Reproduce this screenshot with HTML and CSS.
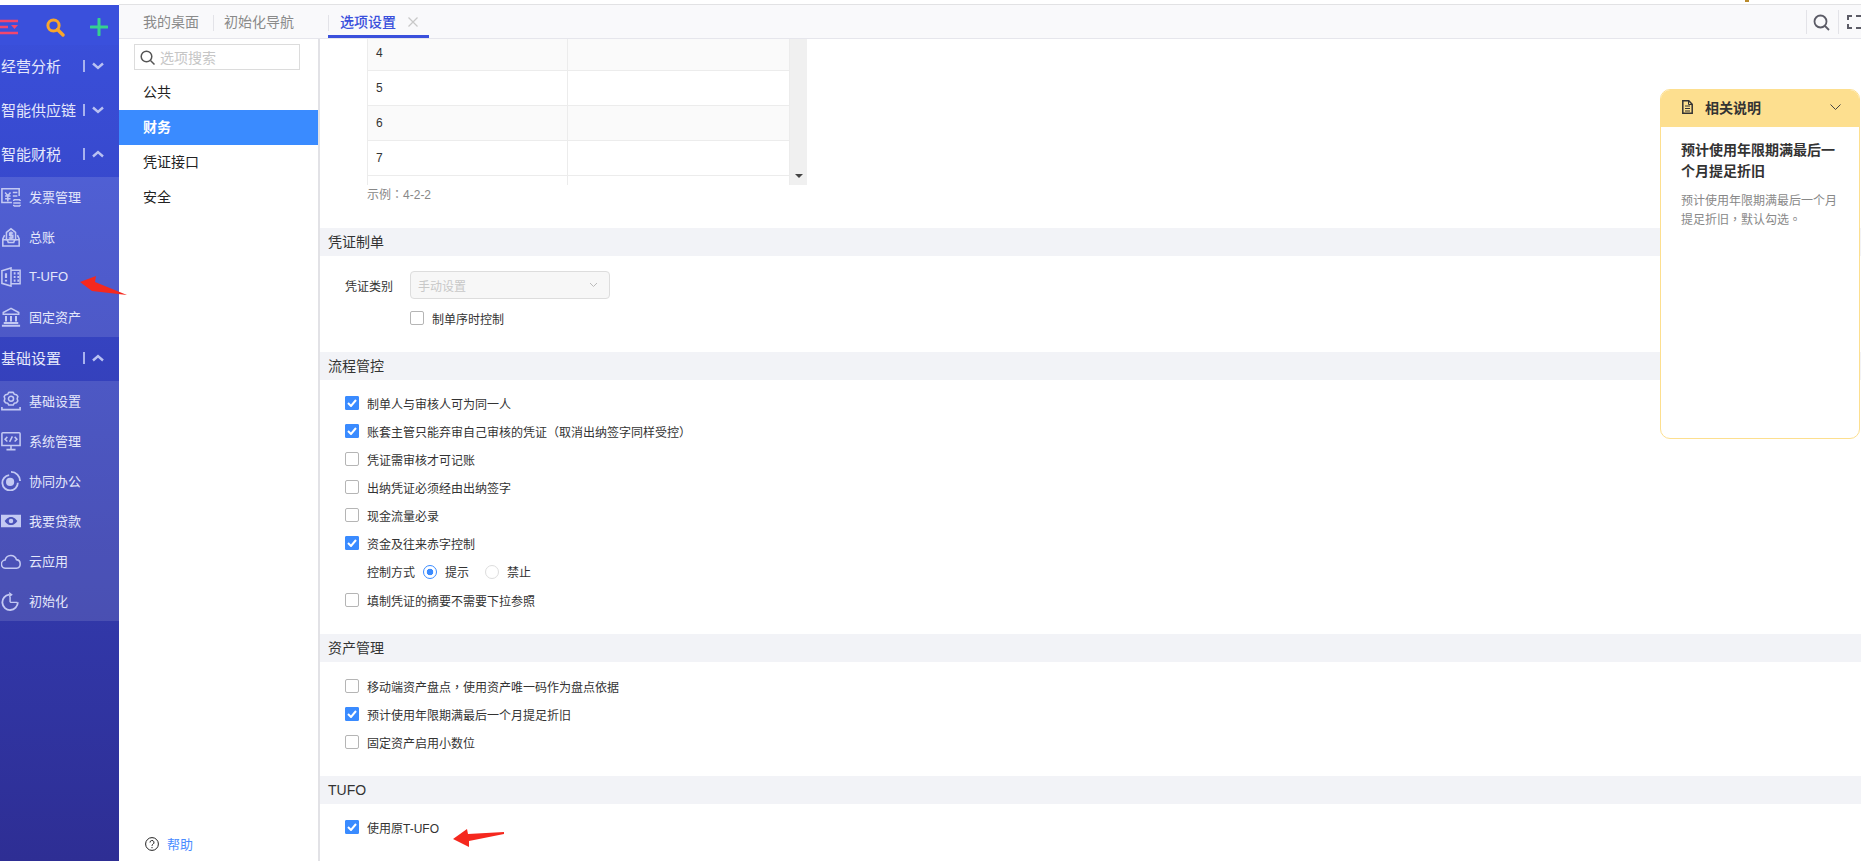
FILE: index.html
```html
<!DOCTYPE html>
<html>
  <head>
    <meta charset="utf-8" />
    <meta name="viewport" content="width=device-width, initial-scale=1" />
    <title>选项设置</title>
    <link rel="stylesheet" href="styles.css">
  </head>
  <body>
    <div class="top-strip"><span class="strip-mark"></span></div>
    <div class="app">
      <!-- blue sidebar -->
      <div class="sidebar">
        <div class="side-top">
          <svg width="20" height="16" viewBox="0 0 20 16"><path d="M0 2h18M0 8h8M0 14h18" stroke="#f2466e" stroke-width="2.4" fill="none"/><path d="M11 6h7l-3.500 4z" fill="#f2466e"/></svg>
          <svg width="19" height="19" viewBox="0 0 19 19"><circle cx="7.500" cy="7.500" r="5.600" stroke="#f9a62b" stroke-width="3" fill="none"/><path d="M11.500 11.500l5.500 5.500" stroke="#f9a62b" stroke-width="3.400" stroke-linecap="round"/></svg>
          <svg width="18" height="18" viewBox="0 0 18 18"><path d="M9 1v16M1 9h16" stroke="#35d18f" stroke-width="3" stroke-linecap="round"/></svg>
        </div>

        <div class="menu-head"><span>经营分析</span><i class="bar"></i><svg class="chev" width="12" height="8" viewBox="0 0 12 8"><path d="M1 1.500l5 4.500 5-4.500" /></svg></div>
        <div class="menu-head"><span>智能供应链</span><i class="bar"></i><svg class="chev" width="12" height="8" viewBox="0 0 12 8"><path d="M1 1.500l5 4.500 5-4.500" /></svg></div>
        <div class="menu-head"><span>智能财税</span><i class="bar"></i><svg class="chev" width="12" height="8" viewBox="0 0 12 8"><path d="M1 6.500l5-4.500 5 4.500" /></svg></div>
        <div class="sub-menu">
          <div class="sub-item">
            <svg class="side-icon" viewBox="0 0 22 22"><path d="M12 17H1V2h19v8"/><path d="M4.500 6L7.500 9.500 10.500 6M4.500 10h6M4.500 13h6M7.500 9.500V16M13 6h5M13 10h5"/><path d="M14 14h7M14 21h7M14 14v1.500M21 14v1.500M14 21v-1.500M21 21v-1.500M13.500 17.500h8"/></svg>
            <span>发票管理</span>
          </div>
          <div class="sub-item">
            <svg class="side-icon" viewBox="0 0 22 22"><path d="M4 9L2 13v8h18v-8l-2-4"/><path d="M2 14h5l1 3h6l1-3h5"/><path d="M6 6l5-4 5 4v8H6z"/><path d="M13.500 6.500h-4v2.700h3.500V12H8.500M11 5v8.500"/></svg>
            <span>总账</span>
          </div>
          <div class="sub-item">
            <svg class="side-icon" viewBox="0 0 22 22"><path d="M1 4l10-3v20L1 18zM11 3.500h10v15H11"/><path d="M5.500 7v5M5.500 14v2M14 7h2M18 7h2M14 11h2M18 11h2M14 15h2M18 15h2" stroke-width="2.400"/></svg>
            <span>T-UFO</span>
          </div>
          <div class="sub-item">
            <svg class="side-icon" viewBox="0 0 22 22"><path d="M11 1.500L2.500 6v2h17V6z"/><path d="M1 20.500h20M3 17.500h16M5.500 10v6M11 10v6M16.500 10v6" stroke-width="2.200"/></svg>
            <span>固定资产</span>
          </div>
        </div>

        <div class="menu-head"><span>基础设置</span><i class="bar"></i><svg class="chev" width="12" height="8" viewBox="0 0 12 8"><path d="M1 6.500l5-4.500 5 4.500" /></svg></div>
        <div class="sub-menu">
          <div class="sub-item">
            <svg class="side-icon" viewBox="0 0 22 22"><path d="M8.500 1.500h5l1 2 2.500.5 1.500 2-.7 2.500.7 2.500-1.500 2-2.500.5-1 2h-5l-1-2-2.500-.5-1.500-2 .7-2.500-.7-2.500 1.500-2 2.500-.5z" stroke-linejoin="round"/><circle cx="11" cy="8.500" r="2.800"/><path d="M1 17.500v3h20v-3" stroke-width="1.800"/></svg>
            <span>基础设置</span>
          </div>
          <div class="sub-item">
            <svg class="side-icon" viewBox="0 0 22 22"><path d="M2 2h18a1 1 0 0 1 1 1v13H1V3a1 1 0 0 1 1-1zM11 16v4M6 20.500h10"/><path d="M7 6.500L4.500 9 7 11.500M15 6.500L17.500 9 15 11.500M12.500 6l-3 6"/></svg>
            <span>系统管理</span>
          </div>
          <div class="sub-item">
            <svg class="side-icon" viewBox="0 0 22 22"><path d="M9 4.500A8.500 8.500 0 1 0 18.500 13" stroke-width="2"/><path d="M11 1a10 10 0 0 1 10 10" stroke-width="2"/><circle cx="10" cy="12" r="4.500" fill="#c3c9f3" stroke="none"/></svg>
            <span>协同办公</span>
          </div>
          <div class="sub-item">
            <svg class="side-icon" viewBox="0 0 22 22"><path fill-rule="evenodd" fill="#c3c9f3" stroke="none" d="M0 4h22v14H0zM11 6.500c-3.500 0-6 3-7 4.500 1 1.500 3.500 4.500 7 4.500s6-3 7-4.500c-1-1.500-3.500-4.500-7-4.500z"/><circle cx="11" cy="11" r="2.500" fill="#c3c9f3" stroke="none"/></svg>
            <span>我要贷款</span>
          </div>
          <div class="sub-item">
            <svg class="side-icon" viewBox="0 0 22 22"><path d="M5.500 19A4.500 4.500 0 0 1 4.500 10 6.500 6.500 0 0 1 17 9.500 4.800 4.800 0 0 1 17 19z" stroke-width="1.700"/></svg>
            <span>云应用</span>
          </div>
          <div class="sub-item">
            <svg class="side-icon" viewBox="0 0 22 22"><path d="M9 4a8.500 8.500 0 1 0 9.500 8.500" stroke-width="2"/><path d="M10 12.500h8M10 6v6.500" stroke-width="1.600"/><path d="M9 1v6l4-3z" fill="#c3c9f3" stroke="none"/></svg>
            <span>初始化</span>
          </div>
        </div>
      </div>

      <!-- option groups -->
      <div class="nav">
        <div class="tab-fill"></div>
        <div class="search-box">
          <svg width="15" height="15" viewBox="0 0 15 15"><circle cx="6.500" cy="6.500" r="5.300" stroke="#555" stroke-width="1.500" fill="none"/><path d="M10.500 10.500l4 4" stroke="#555" stroke-width="1.500"/></svg>
          <span>选项搜索</span>
        </div>
        <div class="nav-item">公共</div>
        <div class="nav-item active">财务</div>
        <div class="nav-item">凭证接口</div>
        <div class="nav-item">安全</div>
        <div class="help">
          <svg width="14" height="14" viewBox="0 0 14 14"><circle cx="7" cy="7" r="6.400" stroke="#222" fill="none"/><path d="M5 5.500a2 2 0 1 1 3 1.700c-.7.400-1 .8-1 1.600M7 10v1.200" stroke="#222" fill="none"/></svg>
          <span>帮助</span>
        </div>
      </div>

      <div class="main">
        <div class="tabs">
          <div class="tab">我的桌面</div>
          <div class="tab">初始化导航</div>
          <div class="tab current">选项设置
            <svg width="10" height="10" viewBox="0 0 10 10"><path d="M.5.500l9 9M9.500.500l-9 9" stroke="#c8c8c8" stroke-width="1.200"/></svg>
          </div>
          <div class="tab-tools">
            <svg width="17" height="17" viewBox="0 0 17 17"><circle cx="7.500" cy="7.500" r="6" stroke="#5b5b66" stroke-width="1.800" fill="none"/><path d="M12 12l4 4" stroke="#5b5b66" stroke-width="1.800"/></svg>
            <i class="tool-sep"></i>
            <svg width="14" height="14" viewBox="0 0 14 14"><path d="M1 5V1h4M9 1h5M1 9v4h4M9 13h5" stroke="#5b5b66" stroke-width="2" fill="none"/></svg>
          </div>
        </div>

        <div class="content">
          <div class="code-table">
            <div class="code-rows">
              <div class="code-row odd"><div>4</div><div></div></div>
              <div class="code-row"><div>5</div><div></div></div>
              <div class="code-row odd"><div>6</div><div></div></div>
              <div class="code-row"><div>7</div><div></div></div>
              <div class="code-row"><div></div><div></div></div>
            </div>
            <div class="code-scroll"><i></i></div>
          </div>
          <div class="sample">示例<span class="mark">：</span>4-2-2</div>

          <div class="section-title first">凭证制单</div>
          <div class="form-line">
            <label>凭证类别</label>
            <div class="select">手动设置
              <svg width="9" height="6" viewBox="0 0 9 6"><path d="M1 1l3.500 3.500L8 1" stroke="#bbb" fill="none"/></svg>
            </div>
          </div>
          <div class="check-row inset"><span class="check"></span>制单序时控制</div>

          <div class="section-title">流程管控</div>
          <div class="group">
            <div class="check-row"><span class="check on"><svg width="10" height="8" viewBox="0 0 10 8"><path d="M1 4l3 3 5-6" /></svg></span>制单人与审核人可为同一人</div>
            <div class="check-row"><span class="check on"><svg width="10" height="8" viewBox="0 0 10 8"><path d="M1 4l3 3 5-6" /></svg></span><span>账套主管只能弃审自己审核的凭证<span class="mark">（</span>取消出纳签字同样受控<span class="mark">）</span></span></div>
            <div class="check-row"><span class="check"></span>凭证需审核才可记账</div>
            <div class="check-row"><span class="check"></span>出纳凭证必须经由出纳签字</div>
            <div class="check-row"><span class="check"></span>现金流量必录</div>
            <div class="check-row"><span class="check on"><svg width="10" height="8" viewBox="0 0 10 8"><path d="M1 4l3 3 5-6" /></svg></span>资金及往来赤字控制</div>
            <div class="radio-row">
              <span>控制方式</span>
              <span class="radio on"></span><span>提示</span>
              <span class="radio second"></span><span>禁止</span>
            </div>
            <div class="check-row"><span class="check"></span>填制凭证的摘要不需要下拉参照</div>
          </div>

          <div class="section-title">资产管理</div>
          <div class="group roomy">
            <div class="check-row"><span class="check"></span><span>移动端资产盘点<span class="mark">，</span>使用资产唯一码作为盘点依据</span></div>
            <div class="check-row"><span class="check on"><svg width="10" height="8" viewBox="0 0 10 8"><path d="M1 4l3 3 5-6" /></svg></span>预计使用年限期满最后一个月提足折旧</div>
            <div class="check-row"><span class="check"></span>固定资产启用小数位</div>
          </div>

          <div class="section-title">TUFO</div>
          <div class="group">
            <div class="check-row"><span class="check on"><svg width="10" height="8" viewBox="0 0 10 8"><path d="M1 4l3 3 5-6" /></svg></span>使用原T-UFO</div>
          </div>

          <div class="note-panel">
            <div class="note-head">
              <svg width="11" height="14" viewBox="0 0 11 14"><path d="M.8.800h6l3.400 3.400v9H.8z" stroke="#333" stroke-width="1.500" fill="none"/><path d="M3 6h5M3 8.500h5M3 11h5M6.500 1v3.500h3.500" stroke="#333" fill="none"/></svg>
              <span>相关说明</span>
              <svg class="note-chev" width="11" height="7" viewBox="0 0 11 7"><path d="M.5.500l5 5 5-5" stroke="#444" fill="none"/></svg>
            </div>
            <div class="note-body">
              <h4>预计使用年限期满最后一个月提足折旧</h4>
              <p>预计使用年限期满最后一个月提足折旧，默认勾选。</p>
            </div>
          </div>
        </div>
      </div>
    </div>

    <!-- red arrows drawn on the screenshot -->
    <svg class="arrow-one" width="50" height="22" viewBox="0 0 50 22"><path d="M0 7L16 1l-1 6 32 13L12 16z" fill="#f5281e"/></svg>
    <svg class="arrow-two" width="54" height="20" viewBox="0 0 54 20"><path d="M1 10L15 0l1 5 36-2v2L17 12l0 6z" fill="#f5281e"/></svg>
  </body>
</html>
```

FILE: styles.css
```css
* {
  box-sizing: border-box;
}
body {
  margin: 0;
  height: 861px;
  overflow: hidden;
  background: #fff;
  font-family: "Liberation Sans", "Noto Sans CJK SC", sans-serif;
  font-size: 12px;
  color: #333;
}
.mark {
  font-family: "Noto Sans CJK TC", sans-serif;
}
.top-strip {
  height: 5px;
  margin-left: 119px;
  border-bottom: 1px solid #e2e2e4;
  display: flex;
  justify-content: flex-end;
  padding-right: 112px;
}
.strip-mark {
  width: 4px;
  height: 2px;
  background: #b98a2c;
}
.app {
  display: flex;
  height: 856px;
}

/* sidebar */
.sidebar {
  width: 119px;
  flex-shrink: 0;
  background: linear-gradient(to bottom, #3a50dc, #2e2e94);
  color: #e4e7fb;
}
.side-top {
  height: 40px;
  display: flex;
  align-items: center;
  justify-content: space-between;
  padding: 4px 11px 0 0;
  background: #3a50dc;
}
.menu-head {
  height: 44px;
  display: flex;
  align-items: center;
  padding: 0 0 3px 1px;
  font-size: 15px;
}
.menu-head span {
  width: 82px;
  white-space: nowrap;
}
.bar {
  width: 2px;
  height: 12px;
  background: #a8b2ee;
}
.chev {
  margin-left: 7px;
  fill: none;
  stroke: #b9c1f2;
  stroke-width: 2.4;
}
.sub-menu {
  background: rgba(255, 255, 255, 0.12);
}
.sub-item {
  height: 40px;
  display: flex;
  align-items: center;
  gap: 8px;
  padding: 0 0 0 1px;
  font-size: 13px;
}
.sub-item span {
  margin-bottom: 2px;
}
.side-icon {
  width: 20px;
  height: 20px;
  flex-shrink: 0;
  fill: none;
  stroke: #c3c9f3;
  stroke-width: 1.700;
}

/* option groups */
.nav {
  width: 201px;
  flex-shrink: 0;
  border-right: 2px solid #e2e2e6;
  position: relative;
  font-size: 14px;
  color: #222;
}
.tab-fill {
  height: 34px;
  background: #f9f9fb;
  border-bottom: 1px solid #e6e6ec;
  margin-right: -2px;
}
.search-box {
  width: 166px;
  height: 26px;
  margin: 5px 0 5px 15px;
  border: 1px solid #dcdcdc;
  display: flex;
  align-items: center;
  gap: 5px;
  padding-left: 5px;
  color: #c6c6c6;
}
.nav-item {
  height: 35px;
  line-height: 34px;
  padding-left: 24px;
}
.nav-item.active {
  background: #3a8bff;
  color: #fff;
  font-weight: 700;
}
.help {
  position: absolute;
  left: 26px;
  bottom: 8px;
  display: flex;
  align-items: center;
  gap: 8px;
  color: #4a8cff;
  font-size: 13px;
}

/* tabs */
.main {
  flex: 1;
  display: flex;
  flex-direction: column;
  min-width: 0;
}
.tabs {
  height: 34px;
  flex-shrink: 0;
  background: #f9f9fb;
  border-bottom: 1px solid #e6e6ec;
  display: flex;
  padding-left: 8px;
  margin-left: -201px;
  position: relative;
  font-size: 14px;
  color: #8a8a8a;
}
.tab {
  padding: 0 0 0 16px;
  height: 33px;
  line-height: 34px;
  white-space: nowrap;
}
.tab:first-child {
  width: 86px;
}
.tab:first-child::after,
.tab:nth-child(2)::after {
  content: "";
  position: absolute;
  top: 10px;
  height: 16px;
  width: 1px;
  background: #e3e3e8;
}
.tab:first-child::after {
  left: 94px;
}
.tab:nth-child(2)::after {
  left: 209px;
}
.tab:nth-child(2) {
  width: 115px;
  padding-left: 11px;
}
.tab.current {
  width: 101px;
  padding: 3px 0 0 12px;
  color: #3a50dc;
  border-bottom: 3px solid #3a50dc;
  display: flex;
  align-items: center;
  gap: 12px;
  font-weight: 500;
}
.tab-tools {
  position: absolute;
  right: 0;
  top: 5px;
  height: 24px;
  width: 55px;
  border-left: 1px solid #e3e3e8;
  display: flex;
  align-items: center;
  justify-content: space-between;
  padding-left: 6px;
}
.tool-sep {
  width: 1px;
  height: 24px;
  background: #e3e3e8;
}

/* content */
.content {
  flex: 1;
  position: relative;
  overflow: hidden;
  min-height: 0;
}
.code-table {
  display: flex;
  width: 440px;
  height: 146px;
  margin-left: 47px;
  overflow: hidden;
  border-left: 1px solid #ececec;
}
.code-rows {
  width: 422px;
  margin-top: -3px;
}
.code-row {
  display: flex;
  height: 35px;
  border-bottom: 1px solid #ececec;
  color: #333;
}
.code-row.odd {
  background: #fafafa;
}
.code-row div:first-child {
  width: 200px;
  line-height: 35px;
  padding-left: 8px;
  border-right: 1px solid #ececec;
}
.code-scroll {
  width: 18px;
  background: #f0f0f0;
  border-left: 1px solid #ececec;
  position: relative;
}
.code-scroll i {
  position: absolute;
  left: 5px;
  bottom: 7px;
  border: 4px solid transparent;
  border-top: 4px solid #444;
  border-bottom: 0;
}
.sample {
  margin: 1px 0 0 47px;
  height: 16px;
  line-height: 15px;
  color: #888;
}
.section-title {
  height: 28px;
  line-height: 28px;
  margin-top: 20px;
  padding-left: 8px;
  background: #f2f3f7;
  font-size: 14px;
  color: #333;
}
.section-title.first {
  margin-top: 26px;
}
.form-line {
  display: flex;
  align-items: center;
  margin: 15px 0 5px 25px;
}
.form-line label {
  width: 65px;
  color: #333;
}
.select {
  width: 200px;
  height: 28px;
  border: 1px solid #ddd;
  border-radius: 4px;
  background: #f7f7f7;
  color: #c8c8c8;
  display: flex;
  align-items: center;
  justify-content: space-between;
  padding: 0 11px 0 7px;
}
.group {
  padding-top: 9px;
}
.group.roomy {
  padding-top: 10px;
}
.check-row {
  height: 28px;
  display: flex;
  align-items: center;
  gap: 8px;
  padding-left: 25px;
  color: #333;
}
.check-row.inset {
  padding-left: 90px;
}
.check {
  width: 14px;
  height: 14px;
  flex-shrink: 0;
  border: 1px solid #b5b5b5;
  border-radius: 2px;
  background: #fff;
  display: flex;
  align-items: center;
  justify-content: center;
}
.check.on {
  background: #3a8bff;
  border-color: #3a8bff;
  border-radius: 1px;
}
.check svg {
  fill: none;
  stroke: #fff;
  stroke-width: 2;
}
.radio-row {
  height: 29px;
  display: flex;
  align-items: center;
  gap: 8px;
  padding-left: 47px;
}
.radio {
  width: 14px;
  height: 14px;
  border: 1px solid #ddd;
  border-radius: 50%;
}
.radio.on {
  border-color: #3a8bff;
  background: radial-gradient(circle, #3a8bff 0, #3a8bff 3px, #fff 3.600px);
}
.radio.second {
  margin-left: 8px;
}

/* note panel over the content */
.note-panel {
  position: absolute;
  left: 1340px;
  top: 50px;
  width: 200px;
  height: 350px;
  background: #fff;
  border: 1px solid #fddf8f;
  border-radius: 10px;
  overflow: hidden;
}
.note-head {
  height: 37px;
  background: #fddf8f;
  display: flex;
  align-items: center;
  padding: 0 18px 3px 21px;
  gap: 12px;
  font-size: 14px;
  font-weight: 700;
  color: #333;
}
.note-chev {
  margin-left: auto;
}
.note-body {
  padding: 13px 20px;
}
.note-body h4 {
  margin: 0;
  font-size: 14px;
  line-height: 21px;
  font-weight: 700;
  color: #333;
}
.note-body p {
  margin: 10px 0 0;
  line-height: 19px;
  font-family: "Liberation Sans", "Noto Sans CJK TC", sans-serif;
  color: #888;
}

/* red arrows */
.arrow-one,
.arrow-two {
  position: absolute;
}
.arrow-one {
  left: 80px;
  top: 275px;
}
.arrow-two {
  left: 452px;
  top: 829px;
}
```
